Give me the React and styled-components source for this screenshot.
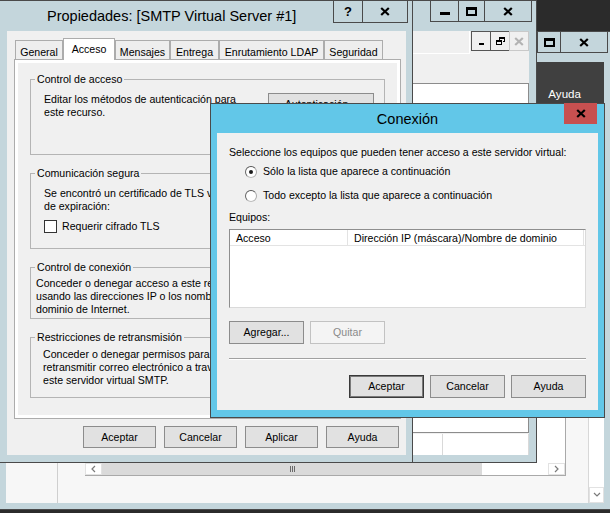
import React from "react";
import styled, { createGlobalStyle } from "styled-components";

const FONT = `"Liberation Sans", Arial, Helvetica, sans-serif`;
const INACTIVE = "#c4d6dc";
const ACTIVE = "#62c7e8";
const EDGE = "#4a4a4a";

const GlobalStyle = createGlobalStyle`
  * { box-sizing: border-box; }
  html, body { margin: 0; padding: 0; background: #2b2b2b; overflow: hidden; }
  body { font-family: ${FONT}; }
`;

const Desktop = styled.div`
  position: relative;
  width: 610px;
  height: 513px;
  overflow: hidden;
  background: #2b2b2b;
  font-family: ${FONT};
  font-size: 10.6px;
  line-height: 13px;
  color: #000;
`;

const Window = styled.div`
  position: absolute;
  left: ${(p) => p.$x}px;
  top: ${(p) => p.$y}px;
  width: ${(p) => p.$w}px;
  height: ${(p) => p.$h}px;
  display: flex;
  flex-direction: column;
  background: ${(p) => (p.$active ? ACTIVE : INACTIVE)};
  border: 1px solid ${EDGE};
`;

const TitleBar = styled.div`
  flex: none;
  height: ${(p) => p.$h}px;
  display: flex;
  align-items: flex-start;
  padding-right: ${(p) => p.$pr}px;
`;

const TitleText = styled.div`
  flex: 1;
  min-width: 0;
  align-self: center;
  padding-left: ${(p) => p.$pl || 0}px;
  text-align: ${(p) => (p.$center ? "center" : "left")};
  font-size: 14.5px;
  line-height: 18px;
  color: #000;
  white-space: nowrap;
  overflow: hidden;
`;

const Caption = styled.div`
  display: flex;
  margin-top: -1px;
`;

const CapBtn = styled.div`
  width: ${(p) => p.$w}px;
  height: ${(p) => p.$h}px;
  display: flex;
  align-items: center;
  justify-content: center;
  border: 1px solid ${(p) => (p.$close ? "#c75050" : EDGE)};
  background: ${(p) => (p.$close ? "#c75050" : "transparent")};
  & + & {
    margin-left: -1px;
  }
`;

const HelpMark = styled.span`
  font-weight: bold;
  font-size: 13px;
  line-height: 13px;
`;

const Client = styled.div`
  flex: 1;
  min-height: 0;
  margin: 0 ${(p) => p.$mr}px ${(p) => p.$mb}px ${(p) => p.$ml}px;
  background: ${(p) => p.$bg || "#f0f0f0"};
  display: flex;
  flex-direction: column;
  overflow: hidden;
`;

const Svg = styled.svg`
  display: block;
  flex: none;
`;

function CloseGlyph({ color = "#000" }) {
  return (
    <Svg width="10" height="9" viewBox="0 0 10 9">
      <path d="M1.2 1 L8.8 8 M8.8 1 L1.2 8" stroke={color} strokeWidth="2.2" fill="none" />
    </Svg>
  );
}

function MinGlyph() {
  return (
    <Svg width="10" height="9" viewBox="0 0 10 9">
      <rect x="0" y="5" width="10" height="3" fill="#000" />
    </Svg>
  );
}

function MaxGlyph() {
  return (
    <Svg width="11" height="9" viewBox="0 0 11 9">
      <path d="M0 0H11V9H0Z M2 3H9V7H2Z" fill="#000" fillRule="evenodd" />
    </Svg>
  );
}

function MdiMin() {
  return (
    <Svg width="7" height="8" viewBox="0 0 7 8">
      <rect x="1" y="6" width="5" height="2" fill="#000" />
    </Svg>
  );
}

function MdiRestore() {
  return (
    <Svg width="9" height="8" viewBox="0 0 9 8">
      <path d="M3 0H9V5H7V4H8V2H4V3H3Z" fill="#000" />
      <path d="M0 3H6V8H0Z M1 5H5V7H1Z" fill="#000" fillRule="evenodd" />
    </Svg>
  );
}

function Chevron({ dir }) {
  const d = {
    left: "M5 1 L2 4 L5 7",
    right: "M2 1 L5 4 L2 7",
    down: "M1 2 L4 5 L7 2",
  }[dir];
  return (
    <Svg width="8" height="8" viewBox="0 0 8 8">
      <path d={d} stroke="#7a7a7a" strokeWidth="1.2" fill="none" />
    </Svg>
  );
}

/* ---------- Buttons, checkboxes, radios ---------- */

const Btn = styled.button`
  flex: none;
  width: ${(p) => p.$w}px;
  height: ${(p) => p.$h}px;
  margin: 0;
  padding: 0;
  font-family: ${FONT};
  font-size: 10.6px;
  line-height: 13px;
  color: ${(p) => (p.disabled ? "#8a8a8a" : "#000")};
  background: ${(p) => (p.disabled ? "#f4f4f4" : "#e1e1e1")};
  border: 1px solid ${(p) => (p.disabled ? "#c2c2c2" : p.$default ? "#3a3a3a" : "#8c8c8c")};
  box-shadow: ${(p) => (p.$default ? "inset 0 0 0 1px #7a7a7a" : "none")};
  display: inline-flex;
  align-items: center;
  justify-content: center;
`;

const CheckBox = styled.span`
  flex: none;
  width: 13px;
  height: 13px;
  border: 1px solid #333;
  background: #fff;
`;

const RadioDot = styled.span`
  flex: none;
  width: 12px;
  height: 12px;
  border-radius: 50%;
  border: 1px solid;
  border-color: #555 #aaa #bbb #666;
  background: #fff;
  display: flex;
  align-items: center;
  justify-content: center;
  &::after {
    content: "";
    width: 4px;
    height: 4px;
    border-radius: 50%;
    background: ${(p) => (p.$checked ? "#1a1a1a" : "transparent")};
  }
`;

/* ---------- Background window A ---------- */

const DarkHeader = styled.div`
  flex: none;
  height: 62px;
  background: #404040;
  display: flex;
  justify-content: flex-end;
  padding: 25px 23px 0 0;
`;

const DarkMenuItem = styled.span`
  color: #fff;
  font-size: 11.6px;
  line-height: 14px;
`;

const ABody = styled.div`
  flex: 1;
  min-height: 0;
  display: flex;
`;

const LeftPane = styled.div`
  flex: none;
  width: 52px;
  border-right: 1px solid #cfcfcf;
  background: #f7f7f7;
`;

const MainPane = styled.div`
  flex: 1;
  min-width: 0;
  display: flex;
  padding: 0 22px 27px 27px;
  background: #f7f7f7;
`;

const InnerList = styled.div`
  flex: 1;
  display: flex;
  flex-direction: column;
  background: #fff;
  border-right: 1px solid #a9a9a9;
  border-bottom: 1px solid #a9a9a9;
`;

const ListFill = styled.div`
  flex: 1;
`;

const HScroll = styled.div`
  flex: none;
  height: 12px;
  display: flex;
`;

const ScrollArrow = styled.div`
  flex: none;
  width: ${(p) => p.$w || 17}px;
  height: ${(p) => p.$h || 12}px;
  background: #fff;
  border: 1px solid #e2e2e2;
  display: flex;
  align-items: center;
  justify-content: center;
`;

const Thumb = styled.div`
  flex: none;
  width: ${(p) => p.$w}px;
  background: #dadada;
  display: flex;
  align-items: center;
  justify-content: center;
  gap: 1px;
`;

const GripLine = styled.span`
  width: 1px;
  height: 6px;
  background: #6a6a6a;
`;

const Track = styled.div`
  flex: 1;
  background: #fff;
`;

const VScroll = styled.div`
  flex: none;
  width: 16px;
  background: #fff;
  border-left: 1px solid #d8d8d8;
  display: flex;
  flex-direction: column;
  justify-content: flex-end;
`;

/* ---------- Background window B ---------- */

const MenuRow = styled.div`
  flex: none;
  height: 23px;
  display: flex;
`;

const MenuArea = styled.div`
  flex: 1;
  border-right: 1px solid #fff;
  border-bottom: 1px solid #fff;
`;

const MdiControls = styled.div`
  display: flex;
  align-items: flex-start;
  padding-left: 1px;
`;

const MdiBtn = styled.div`
  width: 20px;
  height: 20px;
  border: 1px solid ${(p) => (p.$disabled ? "#c9c9c9" : "#555")};
  display: flex;
  align-items: center;
  justify-content: center;
  & + & {
    margin-left: -1px;
  }
`;

const Toolbar = styled.div`
  flex: none;
  height: 29px;
`;

const ContentBox = styled.div`
  flex: 1;
  background: #fff;
  border: 1px solid #8c8c8c;
`;

const StatusBar = styled.div`
  flex: none;
  height: 22px;
  display: flex;
  background: #f0f0f0;
  padding-top: 1px;
`;

const StatusCell = styled.div`
  flex: ${(p) => (p.$grow ? 1 : "none")};
  width: ${(p) => p.$w || 0}px;
  background: #fff;
  border-right: 1px solid #d9d9d9;
`;

/* ---------- Property sheet ---------- */

const SheetBody = styled.div`
  flex: 1;
  display: flex;
  flex-direction: column;
  padding: 7px 5px 0 7px;
`;

const TabStrip = styled.div`
  flex: none;
  height: 21px;
  display: flex;
  align-items: flex-end;
  padding-left: 1px;
  position: relative;
  z-index: 1;
`;

const Tab = styled.div`
  flex: none;
  width: ${(p) => p.$w}px;
  height: ${(p) => (p.$sel ? 22 : 19)}px;
  margin-bottom: ${(p) => (p.$sel ? -1 : 0)}px;
  border: 1px solid #acacac;
  border-bottom: none;
  background: ${(p) => (p.$sel ? "#fff" : "#eeeeee")};
  display: flex;
  align-items: center;
  justify-content: center;
  padding-top: ${(p) => (p.$sel ? 0 : 5)}px;
  white-space: nowrap;
`;

const TabPanel = styled.div`
  flex: none;
  height: 360px;
  border: 1px solid #acacac;
  background: #f0f0f0;
  box-shadow: inset 0 0 0 3px #fff;
  padding: 12px 15px 0 15px;
  display: flex;
  flex-direction: column;
`;

const Group = styled.fieldset`
  flex: none;
  margin: ${(p) => p.$mt || 0}px 0 0 0;
  padding: ${(p) => p.$pt}px 10px 0 ${(p) => p.$pl}px;
  height: ${(p) => p.$h}px;
  border: 1px solid #b4b4b4;
  min-width: 0;
`;

const Legend = styled.legend`
  padding: 0 2px;
  margin-left: ${(p) => 4 - p.$pl}px;
  line-height: 14px;
`;

const GroupRow = styled.div`
  display: flex;
  justify-content: space-between;
  align-items: flex-start;
`;

const GroupText = styled.div`
  white-space: nowrap;
`;

const CheckRow = styled.label`
  display: flex;
  align-items: center;
  gap: 5px;
  margin-top: 7px;
  height: 13px;
`;

const DialogButtons = styled.div`
  flex: none;
  display: flex;
  justify-content: flex-end;
  gap: 8px;
  margin-top: 7px;
  padding-right: 2px;
`;

/* ---------- Conexión dialog ---------- */

const ConnBody = styled.div`
  flex: 1;
  display: flex;
  flex-direction: column;
  padding: 13px 12px 12px 12px;
`;

const RadioGroup = styled.div`
  display: flex;
  flex-direction: column;
  gap: 11px;
  margin-top: 6px;
  padding-left: 16px;
`;

const RadioRow = styled.label`
  display: flex;
  align-items: center;
  gap: 6px;
  height: 13px;
`;

const FieldLabel = styled.div`
  margin-top: 9px;
`;

const ListBox = styled.div`
  flex: none;
  margin-top: 5px;
  height: 79px;
  background: #fff;
  border: 1px solid;
  border-color: #8e8e8e #dadada #dadada #8e8e8e;
  display: flex;
  flex-direction: column;
`;

const ListHeader = styled.div`
  flex: none;
  height: 16px;
  display: flex;
  border-bottom: 1px solid #e3e3e3;
`;

const HeaderCell = styled.div`
  flex: none;
  width: ${(p) => p.$w}px;
  padding: 1px 0 0 6px;
  line-height: 14px;
  border-right: 1px solid #e3e3e3;
  white-space: nowrap;
`;

const ButtonRow = styled.div`
  flex: none;
  display: flex;
  gap: ${(p) => p.$gap}px;
  justify-content: ${(p) => (p.$end ? "flex-end" : "flex-start")};
  margin-top: ${(p) => p.$mt}px;
`;

const Separator = styled.div`
  flex: none;
  margin-top: 14px;
  height: 2px;
  border-top: 1px solid #a0a0a0;
  border-bottom: 1px solid #fff;
`;

const TABS = [
  ["General", 48],
  ["Acceso", 52, true],
  ["Mensajes", 55],
  ["Entrega", 49],
  ["Enrutamiento LDAP", 105],
  ["Seguridad", 59],
];

export default function App() {
  return (
    <>
      <GlobalStyle />
      <Desktop>
        {/* Window A: back main window */}
        <Window $x={-1} $y={31} $w={613} $h={479}>
          <TitleBar $h={30} $pr={3}>
            <TitleText />
            <Caption>
              <CapBtn $w={27} $h={22}>
                <MinGlyph />
              </CapBtn>
              <CapBtn $w={24} $h={22}>
                <MaxGlyph />
              </CapBtn>
              <CapBtn $w={48} $h={22}>
                <CloseGlyph />
              </CapBtn>
            </Caption>
          </TitleBar>
          <Client $ml={6} $mr={7} $mb={6} $bg="#f7f7f7">
            <DarkHeader>
              <DarkMenuItem>Ayuda</DarkMenuItem>
            </DarkHeader>
            <ABody>
              <LeftPane />
              <MainPane>
                <InnerList>
                  <ListFill />
                  <HScroll>
                    <ScrollArrow>
                      <Chevron dir="left" />
                    </ScrollArrow>
                    <Thumb $w={380}>
                      <GripLine />
                      <GripLine />
                      <GripLine />
                    </Thumb>
                    <Track />
                    <ScrollArrow>
                      <Chevron dir="right" />
                    </ScrollArrow>
                  </HScroll>
                </InnerList>
              </MainPane>
              <VScroll>
                <ScrollArrow $w={15} $h={16}>
                  <Chevron dir="down" />
                </ScrollArrow>
              </VScroll>
            </ABody>
          </Client>
        </Window>

        {/* Window B: middle console */}
        <Window $x={300} $y={0} $w={237} $h={463}>
          <TitleBar $h={30} $pr={4}>
            <TitleText />
            <Caption>
              <CapBtn $w={29} $h={22}>
                <MinGlyph />
              </CapBtn>
              <CapBtn $w={27} $h={22}>
                <MaxGlyph />
              </CapBtn>
              <CapBtn $w={48} $h={22}>
                <CloseGlyph />
              </CapBtn>
            </Caption>
          </TitleBar>
          <Client $ml={6} $mr={7} $mb={7}>
            <MenuRow>
              <MenuArea />
              <MdiControls>
                <MdiBtn>
                  <MdiMin />
                </MdiBtn>
                <MdiBtn>
                  <MdiRestore />
                </MdiBtn>
                <MdiBtn $disabled>
                  <CloseGlyph color="#b3b3b3" />
                </MdiBtn>
              </MdiControls>
            </MenuRow>
            <Toolbar />
            <ContentBox />
            <StatusBar>
              <StatusCell $grow />
              <StatusCell $w={86} />
            </StatusBar>
          </Client>
        </Window>

        {/* Property sheet */}
        <Window $x={-1} $y={0} $w={414} $h={463}>
          <TitleBar $h={30} $pr={4}>
            <TitleText $pl={47}>Propiedades: [SMTP Virtual Server #1]</TitleText>
            <Caption>
              <CapBtn $w={30} $h={23}>
                <HelpMark>?</HelpMark>
              </CapBtn>
              <CapBtn $w={46} $h={23}>
                <CloseGlyph />
              </CapBtn>
            </Caption>
          </TitleBar>
          <Client $ml={7} $mr={6} $mb={7}>
            <SheetBody>
              <TabStrip>
                {TABS.map(([label, w, sel]) => (
                  <Tab key={label} $w={w} $sel={sel}>
                    {label}
                  </Tab>
                ))}
              </TabStrip>
              <TabPanel>
                <Group $h={83} $pt={7} $pl={13}>
                  <Legend $pl={13}>Control de acceso</Legend>
                  <GroupRow>
                    <GroupText>
                      Editar los métodos de autenticación para
                      <br />
                      este recurso.
                    </GroupText>
                    <Btn $w={106} $h={23}>
                      Autenticación...
                    </Btn>
                  </GroupRow>
                </Group>
                <Group $mt={11} $h={83} $pt={7} $pl={13}>
                  <Legend $pl={13}>Comunicación segura</Legend>
                  <GroupText>
                    Se encontró un certificado de TLS válido con fecha
                    <br />
                    de expiración:
                  </GroupText>
                  <CheckRow>
                    <CheckBox />
                    Requerir cifrado TLS
                  </CheckRow>
                </Group>
                <Group $mt={11} $h={59} $pt={3} $pl={5}>
                  <Legend $pl={5}>Control de conexión</Legend>
                  <GroupText>
                    Conceder o denegar acceso a este recurso
                    <br />
                    usando las direcciones IP o los nombres de
                    <br />
                    dominio de Internet.
                  </GroupText>
                </Group>
                <Group $mt={11} $h={68} $pt={4} $pl={12}>
                  <Legend $pl={12}>Restricciones de retransmisión</Legend>
                  <GroupText>
                    Conceder o denegar permisos para
                    <br />
                    retransmitir correo electrónico a través de
                    <br />
                    este servidor virtual SMTP.
                  </GroupText>
                </Group>
              </TabPanel>
              <DialogButtons>
                <Btn $w={73} $h={22}>Aceptar</Btn>
                <Btn $w={73} $h={22}>Cancelar</Btn>
                <Btn $w={73} $h={22}>Aplicar</Btn>
                <Btn $w={73} $h={22}>Ayuda</Btn>
              </DialogButtons>
            </SheetBody>
          </Client>
        </Window>

        {/* Conexión dialog (active) */}
        <Window $x={210} $y={103} $w={395} $h={315} $active>
          <TitleBar $h={29} $pr={7}>
            <TitleText $pl={40} $center>
              Conexión
            </TitleText>
            <Caption>
              <CapBtn $w={33} $h={21} $close>
                <CloseGlyph />
              </CapBtn>
            </Caption>
          </TitleBar>
          <Client $ml={6} $mr={6} $mb={7}>
            <ConnBody>
              <div>Seleccione los equipos que pueden tener acceso a este servidor virtual:</div>
              <RadioGroup>
                <RadioRow>
                  <RadioDot $checked />
                  Sólo la lista que aparece a continuación
                </RadioRow>
                <RadioRow>
                  <RadioDot />
                  Todo excepto la lista que aparece a continuación
                </RadioRow>
              </RadioGroup>
              <FieldLabel>Equipos:</FieldLabel>
              <ListBox>
                <ListHeader>
                  <HeaderCell $w={118}>Acceso</HeaderCell>
                  <HeaderCell $w={236}>Dirección IP (máscara)/Nombre de dominio</HeaderCell>
                </ListHeader>
              </ListBox>
              <ButtonRow $gap={6} $mt={13}>
                <Btn $w={75} $h={23}>Agregar...</Btn>
                <Btn $w={75} $h={23} disabled>
                  Quitar
                </Btn>
              </ButtonRow>
              <Separator />
              <ButtonRow $gap={6} $mt={15} $end>
                <Btn $w={75} $h={23} $default>
                  Aceptar
                </Btn>
                <Btn $w={75} $h={23}>Cancelar</Btn>
                <Btn $w={75} $h={23}>Ayuda</Btn>
              </ButtonRow>
            </ConnBody>
          </Client>
        </Window>
      </Desktop>
    </>
  );
}
